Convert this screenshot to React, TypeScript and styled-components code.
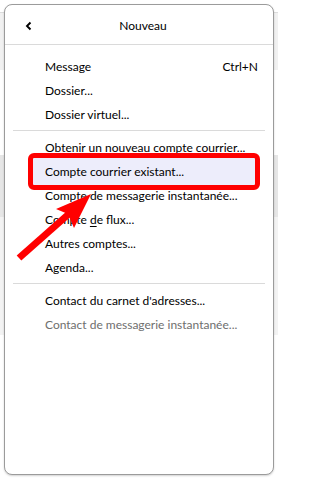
import { createGlobalStyle, styled, css } from 'styled-components';

const GlobalStyle = createGlobalStyle`
  html, body {
    margin: 0;
    padding: 0;
    background: #ffffff;
  }
  body {
    font-family: Lato, "Noto Sans", "Liberation Sans", sans-serif;
  }
`;

type Entry =
  | { kind: 'item'; label: React.ReactNode; shortcut?: string; disabled?: boolean; marked?: boolean }
  | { kind: 'sep' };

const entries: Entry[] = [
  { kind: 'item', label: 'Message', shortcut: 'Ctrl+N' },
  { kind: 'item', label: 'Dossier...' },
  { kind: 'item', label: 'Dossier virtuel...' },
  { kind: 'sep' },
  { kind: 'item', label: 'Obtenir un nouveau compte courrier...' },
  { kind: 'item', label: 'Compte courrier existant...', marked: true },
  { kind: 'item', label: 'Compte de messagerie instantanée...' },
  {
    kind: 'item',
    label: (
      <>
        Compte <u>d</u>e flux...
      </>
    ),
  },
  { kind: 'item', label: 'Autres comptes...' },
  { kind: 'item', label: 'Agenda...' },
  { kind: 'sep' },
  { kind: 'item', label: "Contact du carnet d'adresses..." },
  { kind: 'item', label: 'Contact de messagerie instantanée...', disabled: true },
];

export default function App() {
  return (
    <>
      <GlobalStyle />
      <Page>
        <Panel>
          <Header>
            <BackButton>
              <svg width="8" height="10" viewBox="0 0 8 10">
                <polyline
                  points="5.5,1.5 2,5 5.5,8.5"
                  fill="none"
                  stroke="#000"
                  strokeWidth="1.9"
                />
              </svg>
            </BackButton>
            <Title>Nouveau</Title>
            <HeaderSpacer />
          </Header>
          <MenuList>
            {entries.map((entry, i) =>
              entry.kind === 'sep' ? (
                <Separator key={i} />
              ) : (
                <Item key={i} $disabled={entry.disabled} $marked={entry.marked}>
                  <Label>{entry.label}</Label>
                  {entry.shortcut && <Shortcut>{entry.shortcut}</Shortcut>}
                </Item>
              )
            )}
          </MenuList>
        </Panel>
        <ArrowLayer width="278" height="479" viewBox="0 0 278 479">
          <line x1="71" y1="212" x2="19" y2="258" stroke="#ff0000" strokeWidth="7" />
          <polygon points="91,194 56,209 68,214 74,228" fill="#ff0000" />
        </ArrowLayer>
      </Page>
    </>
  );
}

const Page = styled.div`
  position: relative;
  width: 278px;
  height: 479px;
  box-sizing: border-box;
  padding: 4px 4px 0 4px;
  overflow: hidden;
  background: linear-gradient(
    to bottom,
    #ffffff 0px,
    #ffffff 12px,
    #dcdcdc 12px,
    #dcdcdc 13px,
    #f1f1f1 13px,
    #f1f1f1 70px,
    #ffffff 70px,
    #ffffff 155px,
    #e6e6e6 155px,
    #e6e6e6 217px,
    #f3f3f3 217px,
    #f3f3f3 335px,
    #ffffff 335px
  );
`;

const Panel = styled.div`
  width: 270px;
  height: 471px;
  box-sizing: border-box;
  background: #ffffff;
  border: 1px solid #9b9b9b;
  border-radius: 8px;
  box-shadow: 0 1px 2px rgba(0, 0, 0, 0.18);
  display: flex;
  flex-direction: column;
`;

const Header = styled.div`
  height: 40px;
  box-sizing: border-box;
  border-bottom: 1px solid #dadada;
  display: grid;
  grid-template-columns: 38px 1fr 30px;
  align-items: center;
`;

const BackButton = styled.div`
  display: flex;
  justify-content: flex-start;
  align-items: center;
  padding: 2px 0 0 20px;
`;

const Title = styled.div`
  text-align: center;
  font-size: 12px;
  color: #000;
  padding-top: 2px;
`;

const HeaderSpacer = styled.div``;

const MenuList = styled.div`
  display: flex;
  flex-direction: column;
  padding-top: 9px;
`;

const Item = styled.div<{ $disabled?: boolean; $marked?: boolean }>`
  position: relative;
  isolation: isolate;
  height: 24px;
  display: flex;
  align-items: center;
  padding: 0 15px 0 40px;
  font-size: 12px;
  color: ${(p) => (p.$disabled ? '#6e6e6e' : '#000000')};

  u {
    text-decoration-thickness: 1px;
    text-underline-offset: 2px;
  }

  ${(p) =>
    p.$marked &&
    css`
      &::before {
        content: '';
        position: absolute;
        left: 23px;
        right: 13px;
        top: -6px;
        bottom: -7px;
        border: 5px solid #ff0000;
        border-radius: 6px;
        background: #ededfb;
        z-index: -1;
      }
    `}
`;

const Label = styled.span`
  flex: 1;
  white-space: nowrap;
`;

const Shortcut = styled.span`
  white-space: nowrap;
`;

const Separator = styled.div`
  height: 1px;
  margin: 4px 8px;
  background: #dadada;
`;

const ArrowLayer = styled.svg`
  position: absolute;
  left: 0;
  top: 0;
  pointer-events: none;
`;
